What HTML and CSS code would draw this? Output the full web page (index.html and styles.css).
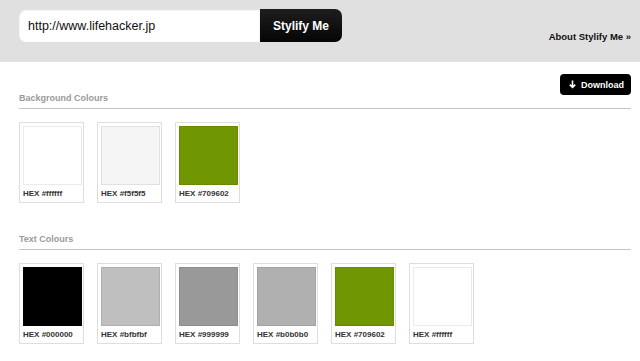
FILE: index.html
```html
<!DOCTYPE html>
<html lang="en">
<head>
    <meta charset="UTF-8">
    <meta name="viewport" content="width=device-width, initial-scale=1.0">
    <title>Stylify Me</title>
    <link rel="stylesheet" href="styles.css">
</head>
<body>

<header class="top">
    <form class="search">
        <input class="url" type="text" value="http://www.lifehacker.jp">
        <button class="go" type="button">Stylify Me</button>
    </form>
    <a class="about" href="#">About Stylify Me &raquo;</a>
</header>

<main class="content">
    <section class="group">
        <div class="group-head">
            <h2>Background Colours</h2>
            <a class="download" href="#">
                <svg width="7" height="9" viewBox="0 0 7 9"><path d="M3.5 0.5v7M0.8 4.6l2.7 2.8 2.7-2.8" fill="none" stroke="#fff" stroke-width="1.6"/></svg>
                Download
            </a>
        </div>
        <div class="swatches">
            <div class="card"><div class="chip" style="background:#ffffff"></div><p>HEX #ffffff</p></div>
            <div class="card"><div class="chip" style="background:#f5f5f5"></div><p>HEX #f5f5f5</p></div>
            <div class="card"><div class="chip" style="background:#709602"></div><p>HEX #709602</p></div>
        </div>
    </section>

    <section class="group">
        <div class="group-head">
            <h2>Text Colours</h2>
        </div>
        <div class="swatches">
            <div class="card"><div class="chip" style="background:#000000"></div><p>HEX #000000</p></div>
            <div class="card"><div class="chip" style="background:#bfbfbf"></div><p>HEX #bfbfbf</p></div>
            <div class="card"><div class="chip" style="background:#999999"></div><p>HEX #999999</p></div>
            <div class="card"><div class="chip" style="background:#b0b0b0"></div><p>HEX #b0b0b0</p></div>
            <div class="card"><div class="chip" style="background:#709602"></div><p>HEX #709602</p></div>
            <div class="card"><div class="chip" style="background:#ffffff"></div><p>HEX #ffffff</p></div>
        </div>
    </section>
</main>

</body>
</html>
```

FILE: styles.css
```css
body {
    margin: 0;
    background: #fff;
    font-family: "Liberation Sans", Arial, sans-serif;
    color: #222;
}

.top {
    height: 62px;
    box-sizing: border-box;
    padding: 9px 9px 0 19px;
    background: #e0e0e0;
    display: flex;
    justify-content: space-between;
    align-items: flex-start;
}

.search {
    display: flex;
    margin: 0;
}

.url {
    width: 241px;
    height: 33px;
    box-sizing: border-box;
    border: 0;
    border-radius: 7px 0 0 7px;
    padding: 0 0 0 9px;
    font-family: "Liberation Sans", Arial, sans-serif;
    font-size: 12.5px;
    color: #111;
    background: #fff;
    box-shadow: inset 0 1px 2px rgba(0,0,0,.15);
    outline: 0;
}

.go {
    width: 82px;
    height: 33px;
    border: 0;
    border-radius: 0 7px 7px 0;
    background: linear-gradient(#1e1e1e, #050505);
    color: #fff;
    font-family: "Liberation Sans", Arial, sans-serif;
    font-weight: bold;
    font-size: 12px;
    padding: 0;
}

.about {
    margin-top: 22px;
    font-size: 9.5px;
    font-weight: bold;
    color: #111;
    text-decoration: none;
}

.content {
    padding: 12px 9px 0 19px;
}

.group {
    margin-bottom: 30px;
}

.group-head {
    display: flex;
    justify-content: space-between;
    align-items: flex-end;
    padding-bottom: 4px;
    border-bottom: 1px solid #c4c4c4;
}

.group-head h2 {
    margin: 0;
    font-size: 9px;
    line-height: 12px;
    color: #9a9a9a;
}

.download {
    display: flex;
    align-items: center;
    gap: 5px;
    width: 71px;
    height: 21px;
    box-sizing: border-box;
    padding: 0 0 0 9px;
    margin-bottom: 9px;
    background: #000;
    border-radius: 4px;
    color: #fff;
    font-size: 9px;
    font-weight: bold;
    text-decoration: none;
}

.swatches {
    display: flex;
    gap: 13px;
    margin-top: 13px;
}

.card {
    width: 65px;
    box-sizing: border-box;
    border: 1px solid #dedede;
    padding: 3px 3px 0 3px;
}

.chip {
    width: 57px;
    height: 57px;
    border: 1px solid rgba(0,0,0,.08);
}

.card p {
    margin: 0;
    height: 17px;
    line-height: 17px;
    font-size: 8px;
    font-weight: bold;
    color: #333;
    white-space: nowrap;
}
```
